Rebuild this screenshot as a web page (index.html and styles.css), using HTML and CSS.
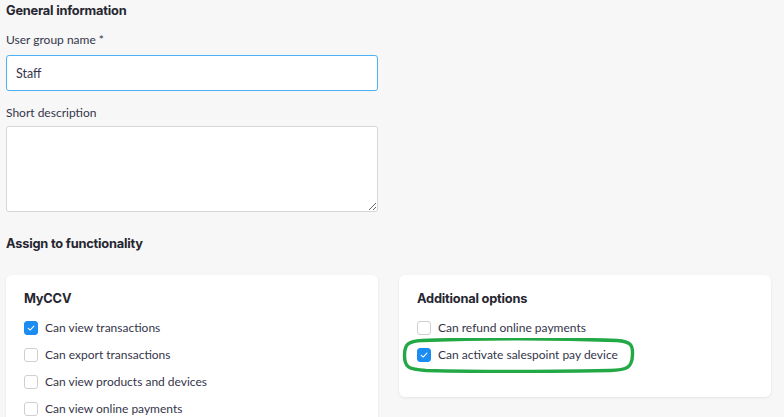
FILE: index.html
```html
<!DOCTYPE html>
<html>
<head>
<meta charset="utf-8">
<link rel="stylesheet" href="styles.css">
</head>
<body>
<div class="page">
  <h2 class="section-title">General information</h2>
  <div class="field">
    <label class="field-label">User group name *</label>
    <input class="text-input" type="text" value="Staff">
  </div>
  <div class="field">
    <label class="field-label second">Short description</label>
    <textarea class="text-area"></textarea>
  </div>
  <h2 class="section-title assign">Assign to functionality</h2>
  <div class="cards">
    <div class="card card-long">
      <h3 class="card-title">MyCCV</h3>
      <div class="option"><span class="box checked"><svg viewBox="0 0 14 14"><path d="M3.6 7.2 L6 9.4 L10.4 4.7" fill="none" stroke="#fff" stroke-width="1.2" stroke-linecap="round" stroke-linejoin="round"/></svg></span><span>Can view transactions</span></div>
      <div class="option"><span class="box"></span><span>Can export transactions</span></div>
      <div class="option"><span class="box"></span><span>Can view products and devices</span></div>
      <div class="option"><span class="box"></span><span>Can view online payments</span></div>
    </div>
    <div class="card">
      <h3 class="card-title">Additional options</h3>
      <div class="option"><span class="box"></span><span>Can refund online payments</span></div>
      <div class="option"><span class="box checked"><svg viewBox="0 0 14 14"><path d="M3.6 7.2 L6 9.4 L10.4 4.7" fill="none" stroke="#fff" stroke-width="1.2" stroke-linecap="round" stroke-linejoin="round"/></svg></span><span>Can activate salespoint pay device</span>
        <svg class="circle-mark" viewBox="0 0 233 35" preserveAspectRatio="none"><path d="M20 2.5 C 80 0.5, 160 0.5, 215 2.5 C 229 3.5, 231 7, 230.5 17 C 230 29, 226 32, 208 32.5 C 150 33.5, 80 34, 24 32.5 C 6 31.5, 2.5 29, 2.5 17.5 C 2.5 6.5, 6 3, 20 2.5 Z" fill="none" stroke="#22a845" stroke-width="3.4"/></svg>
      </div>
    </div>
  </div>
</div>
</body>
</html>
```
FILE: styles.css
```css
* { box-sizing: border-box; }
html, body { margin: 0; padding: 0; }
body {
  background: #f7f7f7;
  font-family: "Lato", "Noto Sans", sans-serif;
  color: #35354a;
  width: 784px;
  height: 417px;
  overflow: hidden;
}
.page {
  padding: 2px 6px 0 6px;
}
.section-title {
  margin: 0;
  font-family: "Inter", "Lato", sans-serif;
  font-size: 12.8px;
  font-weight: 700;
  letter-spacing: -0.2px;
  color: #262630;
  line-height: 17px;
}
.field {
  display: flex;
  flex-direction: column;
}
.field-label {
  font-size: 12px;
  line-height: 16px;
  margin-top: 13px;
  margin-bottom: 7px;
  color: #35354a;
}
.field-label.second {
  margin-top: 14px;
  margin-bottom: 5px;
}
.text-input {
  width: 372px;
  height: 36px;
  border: 1px solid #4cb0f4;
  border-radius: 3px;
  background: #fff;
  padding: 0 9px;
  font-family: "Lato", "Noto Sans", sans-serif;
  font-size: 12.5px;
  color: #35354a;
  outline: none;
  margin: 0;
}
.text-area {
  width: 372px;
  height: 86px;
  border: 1px solid #d6d6d6;
  border-radius: 3px;
  background: #fff;
  resize: vertical;
  margin: 0;
  display: block;
}
.assign {
  margin-top: 23px;
}
.cards {
  display: flex;
  gap: 21px;
  margin-top: 23px;
  align-items: flex-start;
}
.card {
  width: 372px;
  background: #fff;
  border-radius: 6px;
  box-shadow: 0 1px 3px rgba(0,0,0,0.08);
  padding: 16px 18px 29px 18px;
}
.card-long {
  padding-bottom: 40px;
}
.card-title {
  margin: 0 0 7px 0;
  font-family: "Inter", "Lato", sans-serif;
  font-size: 12.8px;
  font-weight: 700;
  letter-spacing: -0.2px;
  color: #262630;
  line-height: 16px;
}
.option {
  display: flex;
  align-items: center;
  gap: 7px;
  height: 27px;
  font-size: 12px;
  position: relative;
}
.box {
  width: 14px;
  height: 14px;
  border: 1px solid #cfcfcf;
  border-radius: 3px;
  background: #fff;
  flex: none;
  display: flex;
}
.box.checked {
  background: #1a8cf2;
  border-color: #1a8cf2;
}
.box svg { width: 100%; height: 100%; }
.circle-mark {
  position: absolute;
  left: -15px;
  top: -3px;
  width: 233px;
  height: 35px;
  pointer-events: none;
}
```
